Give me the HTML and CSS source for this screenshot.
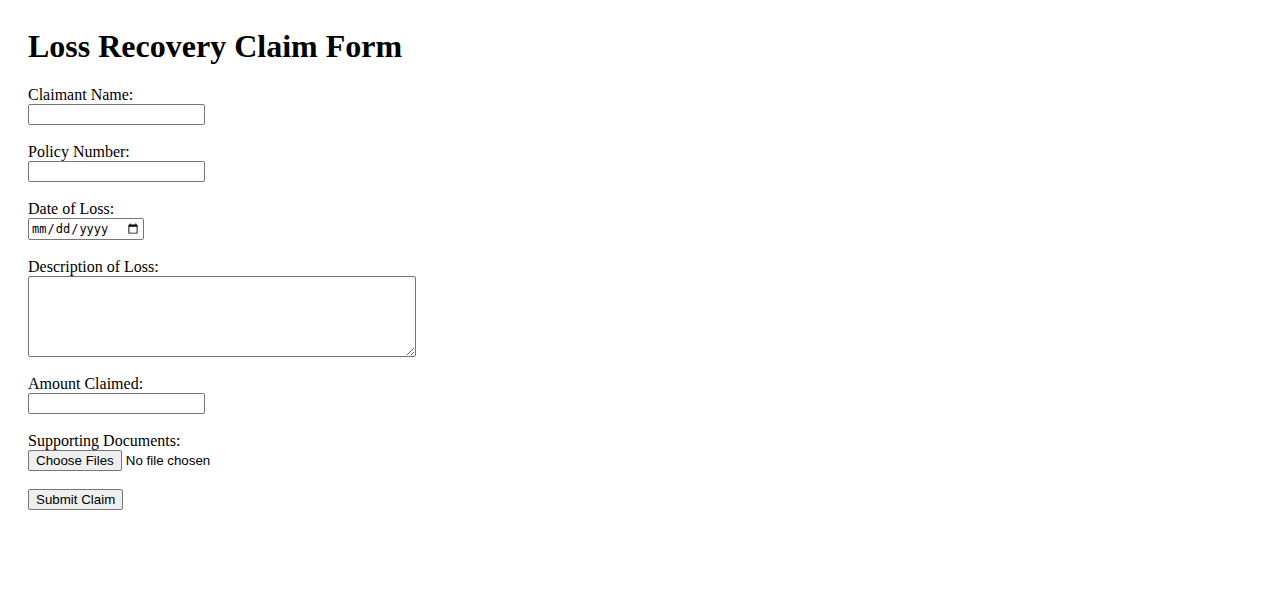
FILE: index.html
```html
<!DOCTYPE html>
<html lang="en">
<head>
    <meta charset="UTF-8">
    <title>Loss Recovery Claim Form</title>
    <link rel="stylesheet" href="styles.css">
</head>
<body>
    <h1>Loss Recovery Claim Form</h1>

    <form class="claim-form">
        <div class="field">
            <label for="claimant">Claimant Name:</label>
            <input type="text" id="claimant" class="text-input">
        </div>

        <div class="field">
            <label for="policy">Policy Number:</label>
            <input type="text" id="policy" class="text-input">
        </div>

        <div class="field">
            <label for="loss-date">Date of Loss:</label>
            <input type="date" id="loss-date" class="date-input">
        </div>

        <div class="field">
            <label for="description">Description of Loss:</label>
            <textarea id="description" class="text-area"></textarea>
        </div>

        <div class="field">
            <label for="amount">Amount Claimed:</label>
            <input type="text" id="amount" class="text-input">
        </div>

        <div class="field">
            <label for="documents">Supporting Documents:</label>
            <input type="file" id="documents" class="file-input" multiple>
        </div>

        <button type="submit" class="submit-btn">Submit Claim</button>
    </form>
</body>
</html>
```

FILE: styles.css
```css
body {
    font-family: "Liberation Serif", "Times New Roman", serif;
    font-size: 16px;
    color: black;
    background-color: white;
    margin: 8px;
    padding: 20px;
}

h1 {
    font-size: 32px;
    font-weight: bold;
    margin: 0 0 21px 0;
    line-height: 37px;
}

.field {
    margin-bottom: 18px;
}

.field label {
    display: block;
    line-height: 18px;
}

.text-input,
.date-input,
.text-area {
    display: block;
    box-sizing: border-box;
    margin: 0;
    border: 1px solid #767676;
    border-radius: 2px;
    background-color: white;
}

.text-input {
    width: 177px;
    height: 21px;
    padding: 1px 2px;
}

.date-input {
    width: 116px;
    height: 22px;
    padding: 1px 2px;
    font-family: "DejaVu Sans Mono", "Liberation Mono", monospace;
    font-size: 12px;
    color: black;
}

.text-area {
    width: 388px;
    height: 81px;
    padding: 2px;
    resize: both;
    font-family: "Liberation Mono", monospace;
    font-size: 13px;
}

.file-input {
    display: block;
    margin: 0;
    height: 21px;
    font-family: "Liberation Sans", Arial, sans-serif;
    font-size: 13.33px;
}

.file-input::file-selector-button {
    font-family: "Liberation Sans", Arial, sans-serif;
    font-size: 13.33px;
    background-color: #efefef;
    border: 1px solid #767676;
    border-radius: 2px;
    padding: 1px 7px;
    height: 21px;
    margin-right: 4px;
    color: black;
}

.submit-btn {
    display: block;
    margin: 0;
    height: 21px;
    padding: 1px 7px;
    font-family: "Liberation Sans", Arial, sans-serif;
    font-size: 13.33px;
    background-color: #efefef;
    border: 1px solid #767676;
    border-radius: 2px;
    color: black;
}
```
